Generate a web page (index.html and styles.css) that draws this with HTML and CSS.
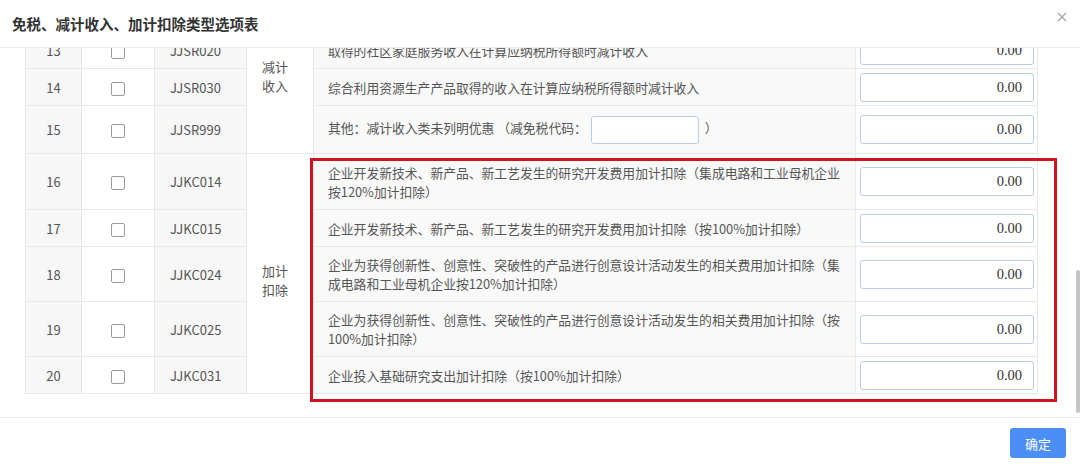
FILE: index.html
```html
<!doctype html>
<html>

<head>
<meta charset="utf-8">
<title>免税、减计收入、加计扣除类型选项表</title>
<link rel="stylesheet" href="styles.css">
</head>

<body>
    <div id="dialog">
        <div class="dlg-head">
            <span class="dlg-title">免税、减计收入、加计扣除类型选项表</span>
            <span class="dlg-close">
                <svg width="10" height="10" viewBox="0 0 10 10"><path d="M1 1L9 9M9 1L1 9" stroke="#a6a6a6" stroke-width="1.4" fill="none"/></svg>
            </span>
        </div>

        <div class="dlg-body">
            <div class="viewport">
                <table class="opt-table">
                    <colgroup>
                        <col style="width:56px">
                        <col style="width:73px">
                        <col style="width:92px">
                        <col style="width:67px">
                        <col style="width:542px">
                        <col style="width:182px">
                    </colgroup>
                    <tr class="h1">
                        <td class="num">13</td>
                        <td class="chk"><span class="box"></span></td>
                        <td class="code">JJSR020</td>
                        <td class="cat cat-top" rowspan="3">减计<br>收入</td>
                        <td class="desc">取得的社区家庭服务收入在计算应纳税所得额时减计收入</td>
                        <td class="amt"><input class="money" value="0.00"></td>
                    </tr>
                    <tr class="h1">
                        <td class="num">14</td>
                        <td class="chk"><span class="box"></span></td>
                        <td class="code">JJSR030</td>
                        <td class="desc">综合利用资源生产产品取得的收入在计算应纳税所得额时减计收入</td>
                        <td class="amt"><input class="money" value="0.00"></td>
                    </tr>
                    <tr class="h-other">
                        <td class="num">15</td>
                        <td class="chk"><span class="box"></span></td>
                        <td class="code">JJSR999</td>
                        <td class="desc">其他：减计收入类未列明优惠 （减免税代码：<input class="tax-code">）</td>
                        <td class="amt"><input class="money" value="0.00"></td>
                    </tr>
                    <tr class="h2 first">
                        <td class="num">16</td>
                        <td class="chk"><span class="box"></span></td>
                        <td class="code">JJKC014</td>
                        <td class="cat cat-mid" rowspan="5">加计<br>扣除</td>
                        <td class="desc">企业开发新技术、新产品、新工艺发生的研究开发费用加计扣除（集成电路和工业母机企业按120%加计扣除）</td>
                        <td class="amt"><input class="money" value="0.00"></td>
                    </tr>
                    <tr class="h1">
                        <td class="num">17</td>
                        <td class="chk"><span class="box"></span></td>
                        <td class="code">JJKC015</td>
                        <td class="desc">企业开发新技术、新产品、新工艺发生的研究开发费用加计扣除（按100%加计扣除）</td>
                        <td class="amt"><input class="money" value="0.00"></td>
                    </tr>
                    <tr class="h2">
                        <td class="num">18</td>
                        <td class="chk"><span class="box"></span></td>
                        <td class="code">JJKC024</td>
                        <td class="desc">企业为获得创新性、创意性、突破性的产品进行创意设计活动发生的相关费用加计扣除（集成电路和工业母机企业按120%加计扣除）</td>
                        <td class="amt"><input class="money" value="0.00"></td>
                    </tr>
                    <tr class="h2">
                        <td class="num">19</td>
                        <td class="chk"><span class="box"></span></td>
                        <td class="code">JJKC025</td>
                        <td class="desc">企业为获得创新性、创意性、突破性的产品进行创意设计活动发生的相关费用加计扣除（按100%加计扣除）</td>
                        <td class="amt"><input class="money" value="0.00"></td>
                    </tr>
                    <tr class="h1">
                        <td class="num">20</td>
                        <td class="chk"><span class="box"></span></td>
                        <td class="code">JJKC031</td>
                        <td class="desc">企业投入基础研究支出加计扣除（按100%加计扣除）</td>
                        <td class="amt"><input class="money" value="0.00"></td>
                    </tr>
                </table>
            </div>

            <div class="scroll-track"><div class="scroll-thumb"></div></div>

            <!-- red mark round the rows 16 - 20 -->
            <div class="mark-box"></div>
        </div>

        <div class="dlg-foot">
            <button class="btn-ok">确定</button>
        </div>
    </div>
</body>

</html>
```

FILE: styles.css
```css
*{
    margin : 0;
    padding : 0;
    box-sizing : border-box;
}
body{
    background : white;
    font-family : "Noto Sans CJK SC", "Noto Sans", sans-serif;
    color : #555;
}

#dialog{
    width : 1080px;
    height : 467px;
    display : flex;
    flex-direction : column;
    background : white;
}

.dlg-head{
    height : 48px;
    border-bottom : 1px solid #ededed;
    display : flex;
    justify-content : space-between;
    padding : 0 13px 0 12px;
}
.dlg-title{
    line-height : 47px;
    font-size : 14.5px;
    font-weight : bold;
    color : #333;
}
.dlg-close{
    margin-top : 12px;
    width : 10px;
    height : 10px;
}
.dlg-close svg{
    display : block;
}

.dlg-body{
    position : relative;
    height : 369px;
    display : flex;
}
.viewport{
    flex : 1;
    overflow : hidden;
    padding-left : 25px;
}

.opt-table{
    margin-top : -16px;
    width : 1013px;
    table-layout : fixed;
    border-collapse : separate;
    border-spacing : 0;
    border-left : 1px solid #e8e8e8;
    font-size : 13px;
}
.opt-table td{
    border-right : 1px solid #e8e8e8;
    border-bottom : 1px solid #e8e8e8;
    vertical-align : middle;
}
.h1{ height : 37px; }
.h2{ height : 55px; }
.h2.first{ height : 56px; }
.h-other{ height : 48px; }

.num{
    background : #f7f7f7;
    text-align : center;
}
.chk{
    text-align : center;
    background : white;
}
.box{
    display : inline-block;
    width : 14px;
    height : 14px;
    border : 1px solid #9a9a9a;
    border-radius : 2px;
    vertical-align : middle;
    background : white;
}
.code{
    background : #f7f7f7;
    padding-left : 15px;
}
.cat{
    background : white;
    padding-left : 15px;
    line-height : 19px;
}
.cat-top{
    vertical-align : top !important;
    padding-top : 25px;
}
.cat-mid{
    padding-top : 12px;
}
.desc{
    background : #f9f9f9;
    padding : 0 8px 0 14px;
    font-size : 12.8px;
    line-height : 19px;
}
.amt{
    background : white;
    padding-left : 4px;
}

.money{
    display : block;
    width : 174px;
    height : 29px;
    border : 1px solid #b7cdea;
    border-radius : 3px;
    padding-right : 11px;
    text-align : right;
    font-family : "Liberation Serif", serif;
    font-size : 14.5px;
    color : #333;
    background : white;
    outline : none;
}
.tax-code{
    width : 108px;
    height : 28px;
    margin : 0 6px 0 4px;
    vertical-align : middle;
    border : 1px solid #b7cdea;
    border-radius : 3px;
    background : white;
    outline : none;
}

.scroll-track{
    width : 6px;
    padding-left : 2px;
}
.scroll-thumb{
    margin-top : 222px;
    width : 4px;
    height : 143px;
    border-radius : 2px;
    background : #c3c3c3;
}

.mark-box{
    position : absolute;
    left : 310px;
    top : 110px;
    width : 747px;
    height : 244px;
    border : 3px solid #c8161e;
}

.dlg-foot{
    flex : 1;
    border-top : 1px solid #ededed;
    display : flex;
    justify-content : flex-end;
    padding : 10px 14px 0 0;
}
.btn-ok{
    width : 56px;
    height : 30px;
    border : none;
    border-radius : 3px;
    background : #4b8ef6;
    color : white;
    font-family : "Noto Sans CJK SC", sans-serif;
    font-size : 13px;
}
```
